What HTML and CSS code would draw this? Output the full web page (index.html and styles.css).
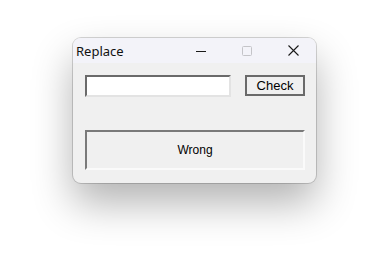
FILE: index.html
```html
<!DOCTYPE html>
<html lang="en">
<head>
    <meta charset="UTF-8">
    <meta name="viewport" content="width=device-width, initial-scale=1.0">
    <title>Replace</title>
    <link rel="stylesheet" href="styles.css">
</head>
<body>

    <div class="window">
        <div class="title-bar">
            <span class="title">Replace</span>
            <div class="caption-buttons">
                <div class="caption-btn">
                    <svg width="10" height="10" viewBox="0 0 10 10"><path d="M0 5.5h10" stroke="#1a1a1a" stroke-width="1"/></svg>
                </div>
                <div class="caption-btn">
                    <svg width="10" height="10" viewBox="0 0 10 10"><rect x="0.5" y="0.5" width="9" height="9" rx="1" fill="none" stroke="#c4c4c8" stroke-width="1"/></svg>
                </div>
                <div class="caption-btn">
                    <svg width="11" height="11" viewBox="0 0 11 11"><path d="M0.5 0.5l10 10M10.5 0.5l-10 10" stroke="#1a1a1a" stroke-width="1.1"/></svg>
                </div>
            </div>
        </div>

        <div class="window-body">
            <div class="input-row">
                <input type="text" class="text-box">
                <button class="check-btn">Check</button>
            </div>
            <div class="result-box">Wrong</div>
        </div>
    </div>

</body>
</html>
```

FILE: styles.css
```css
html, body {
    height: 100%;
}

body {
    box-sizing: border-box;
    margin: 0;
    padding: 38px 0 0 73px;
    background-color: #fff;
    font-family: 'Liberation Sans', Arial, sans-serif;
}

.window {
    width: 243px;
    height: 145px;
    border-radius: 8px;
    background-color: #f0f0f0;
    box-shadow: 0 0 0 1px rgba(0, 0, 0, 0.16), 0 20px 40px rgba(0, 0, 0, 0.3);
    overflow: hidden;
    display: flex;
    flex-direction: column;
}

.title-bar {
    height: 25px;
    background-color: #f3f3f9;
    display: flex;
    align-items: center;
    justify-content: space-between;
}

.title {
    font-family: 'Noto Sans', 'Open Sans', sans-serif;
    font-size: 13px;
    color: #111;
    padding-left: 3px;
    padding-top: 1px;
}

.caption-buttons {
    display: flex;
    height: 100%;
}

.caption-btn {
    width: 46px;
    height: 100%;
    display: flex;
    align-items: center;
    justify-content: center;
}

.window-body {
    flex: 1;
    padding: 12px 11px 13px 12px;
    display: flex;
    flex-direction: column;
    justify-content: space-between;
}

.input-row {
    display: flex;
    justify-content: space-between;
    align-items: flex-start;
}

.text-box {
    box-sizing: border-box;
    width: 146px;
    height: 22px;
    margin: 0;
    padding: 0 3px;
    background-color: #fff;
    border-style: solid;
    border-width: 2px;
    border-color: #6a6a6a #e3e3e3 #e3e3e3 #6a6a6a;
    outline: none;
}

.check-btn {
    box-sizing: border-box;
    width: 60px;
    height: 21px;
    margin: 0;
    padding: 0;
    background-color: #f0f0f0;
    border: 2px solid #6a6a6a;
    font-family: 'Liberation Sans', Arial, sans-serif;
    font-size: 13px;
    color: #000;
}

.result-box {
    box-sizing: border-box;
    height: 40px;
    border-style: solid;
    border-width: 2px;
    border-color: #7a7a7a #fafafa #fafafa #7a7a7a;
    display: flex;
    align-items: center;
    justify-content: center;
    font-size: 12px;
    color: #000;
}
```
